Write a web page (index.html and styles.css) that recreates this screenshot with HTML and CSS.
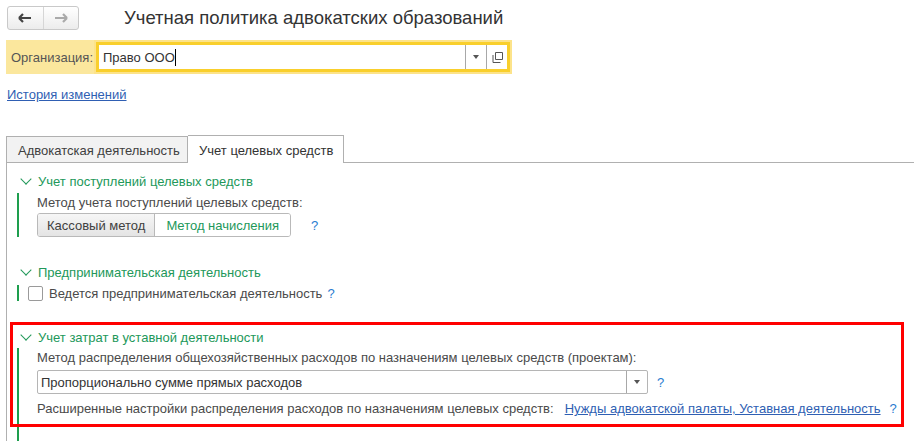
FILE: index.html
```html
<!DOCTYPE html>
<html lang="ru">

<head>
    <meta charset="UTF-8">
    <meta name="viewport" content="width=device-width, initial-scale=1.0">
    <title>Учетная политика адвокатских образований</title>
    <link rel="stylesheet" href="styles.css">
</head>

<body>
    <div class="top">
        <div class="nav">
            <div class="nav-btn">
                <svg width="14" height="10" viewBox="0 0 14 10"><path d="M1 5h12M1 5l4-4M1 5l4 4" stroke="#444" stroke-width="2.2" fill="none"/></svg>
            </div>
            <div class="nav-btn">
                <svg width="14" height="10" viewBox="0 0 14 10"><path d="M13 5H1M13 5L9 1M13 5L9 9" stroke="#aaa" stroke-width="2.2" fill="none"/></svg>
            </div>
        </div>
        <div class="title">Учетная политика адвокатских образований</div>
    </div>

    <div class="org">
        <span class="org-label">Организация:</span>
        <div class="org-input">
            <span class="org-value">Право ООО<span class="caret"></span></span>
            <span class="field-btn"><span class="tri"></span></span>
            <span class="field-btn">
                <svg width="11" height="11" viewBox="0 0 11 11"><path d="M3.5 0.5h7v7h-7z M1 3v7.5h7.5" stroke="#555" stroke-width="1" fill="none"/></svg>
            </span>
        </div>
    </div>

    <a class="history" href="#">История изменений</a>

    <div class="tabs">
        <div class="tab">Адвокатская деятельность</div>
        <div class="tab tab-active">Учет целевых средств</div>
        <div class="tab-rest"></div>
    </div>

    <div class="tab-body">
        <div class="group">
            <div class="group-head"><span class="chev"></span>Учет поступлений целевых средств</div>
            <div class="group-inner">
                <div class="label">Метод учета поступлений целевых средств:</div>
                <div class="row">
                    <div class="switch">
                        <span class="sw">Кассовый метод</span>
                        <span class="sw sw-on">Метод начисления</span>
                    </div>
                    <span class="help help-wide">?</span>
                </div>
            </div>
        </div>

        <div class="group group-2">
            <div class="group-head"><span class="chev"></span>Предпринимательская деятельность</div>
            <div class="group-inner group-check">
                <span class="check"></span>
                <span class="check-text">Ведется предпринимательская деятельность</span>
                <span class="help help-near">?</span>
            </div>
        </div>

        <div class="group group-3">
            <div class="group-head"><span class="chev"></span>Учет затрат в уставной деятельности</div>
            <div class="group-inner group-tall">
                <div class="label">Метод распределения общехозяйственных расходов по назначениям целевых средств (проектам):</div>
                <div class="row row-select">
                    <div class="select">
                        <span class="select-value">Пропорционально сумме прямых расходов</span>
                        <span class="field-btn"><span class="tri"></span></span>
                    </div>
                    <span class="help">?</span>
                </div>
                <div class="row row-last">
                    <span>Расширенные настройки распределения расходов по назначениям целевых средств:</span>
                    <a class="link" href="#">Нужды адвокатской палаты, Уставная деятельность</a>
                    <span class="help">?</span>
                </div>
            </div>
        </div>

        <div class="mark"></div>
    </div>
</body>

</html>
```

FILE: styles.css
```css
* {
    margin: 0;
    padding: 0;
    box-sizing: border-box;
}

body {
    width: 914px;
    height: 441px;
    overflow: hidden;
    font-family: "Liberation Sans", Arial, sans-serif;
    font-size: 13px;
    color: #4a4a4a;
    background: #fff;
}

.top {
    display: flex;
    align-items: center;
    padding: 6px 0 0 7px;
    height: 30px;
}

.nav {
    display: flex;
    width: 72px;
    height: 24px;
    border: 1px solid #c9c9c9;
    border-radius: 3px;
    background: linear-gradient(#ffffff, #ececec);
}

.nav-btn {
    flex: 1;
    display: flex;
    align-items: center;
    justify-content: center;
}

.nav-btn + .nav-btn {
    border-left: 1px solid #d6d6d6;
}

.title {
    margin-left: 45px;
    font-size: 18.5px;
    color: #333;
}

.org {
    display: flex;
    align-items: center;
    margin: 10px 0 0 6px;
    width: 506px;
    height: 34px;
    background: #fbe79d;
    padding-left: 5px;
}

.org-label {
    color: #555;
    width: 83px;
}

.org-input {
    display: flex;
    align-items: center;
    width: 418px;
    height: 34px;
    border: 2px solid #fce38a;
    background: #fff;
    box-shadow: inset 0 0 0 3px #f9cf2c;
    padding: 3px;
}

.org-value {
    flex: 1;
    padding-left: 4px;
    color: #333;
    display: flex;
    align-items: center;
}

.caret {
    display: inline-block;
    width: 1px;
    height: 17px;
    background: #000;
}

.field-btn {
    display: flex;
    align-items: center;
    justify-content: center;
    width: 21px;
    height: 100%;
    border-left: 1px solid #a8a8a8;
}

.tri {
    width: 0;
    height: 0;
    border-left: 3px solid transparent;
    border-right: 3px solid transparent;
    border-top: 4px solid #555;
}

.history {
    display: inline-block;
    margin: 13px 0 0 7px;
    color: #2f5fb3;
    text-decoration: underline;
}

.tabs {
    display: flex;
    align-items: flex-end;
    margin: 33px 0 0 6px;
    height: 28px;
}

.tab {
    height: 27px;
    padding: 6px 0 0 11px;
    border: 1px solid #b0b0b0;
    background: #f2f2f2;
    color: #404040;
    width: 182px;
    white-space: nowrap;
}

.tab-active {
    height: 28px;
    width: 156px;
    border-left: none;
    border-bottom: none;
    background: #fff;
    padding: 7px 0 0 11px;
    color: #333;
}

.tab-rest {
    flex: 1;
    border-bottom: 1px solid #b0b0b0;
}

.tab-body {
    position: relative;
    margin-left: 6px;
    height: 280px;
    border-left: 1px solid #b0b0b0;
    padding: 10px 0 0 10px;
}

.group-head {
    display: flex;
    align-items: center;
    height: 16px;
    padding-left: 3px;
    color: #22985a;
}

.chev {
    width: 8px;
    height: 8px;
    border-right: 1.5px solid #22985a;
    border-bottom: 1.5px solid #22985a;
    transform: rotate(45deg);
    margin: -5px 8px 0 2px;
}

.group-inner {
    margin-top: 4px;
    border-left: 2px solid #1e9e4e;
    padding-left: 18px;
}

.label {
    height: 18px;
    padding-top: 2px;
}

.row {
    display: flex;
    align-items: center;
    margin-top: 2px;
}

.switch {
    display: flex;
    height: 24px;
    border: 1px solid #b9b9b9;
    border-radius: 3px;
    overflow: hidden;
}

.sw {
    display: flex;
    align-items: center;
    padding: 0 9px;
    background: linear-gradient(#f6f6f6, #e4e4e4);
    color: #404040;
}

.sw-on {
    background: #fff;
    color: #22985a;
    border-left: 1px solid #b9b9b9;
    padding: 0 11px;
}

.help {
    color: #2a7dd0;
    margin-left: 9px;
}

.help-wide {
    margin-left: 20px;
}

.help-near {
    margin-left: 5px;
}

.group-2 {
    margin-top: 27px;
}

.group-check {
    display: flex;
    align-items: center;
    height: 16px;
    margin-top: 5px;
    padding-left: 9px;
}

.check {
    width: 15px;
    height: 15px;
    border: 1px solid #9a9a9a;
    border-radius: 2px;
    margin-right: 6px;
}

.group-3 {
    margin-top: 28px;
}

.group-tall {
    height: 95px;
    margin-top: 3px;
}

.row-select {
    margin-top: 4px;
}

.select {
    display: flex;
    align-items: center;
    width: 611px;
    height: 24px;
    border: 1px solid #b5b5b5;
    border-radius: 2px;
}

.select-value {
    flex: 1;
    padding-left: 3px;
    color: #333;
}

.row-last {
    margin-top: 7px;
}

.link {
    margin-left: 11px;
    color: #2f5fb3;
    text-decoration: underline;
}

.mark {
    position: absolute;
    left: 3px;
    top: 159px;
    width: 894px;
    height: 105px;
    border: 3px solid #ff0000;
}
```
